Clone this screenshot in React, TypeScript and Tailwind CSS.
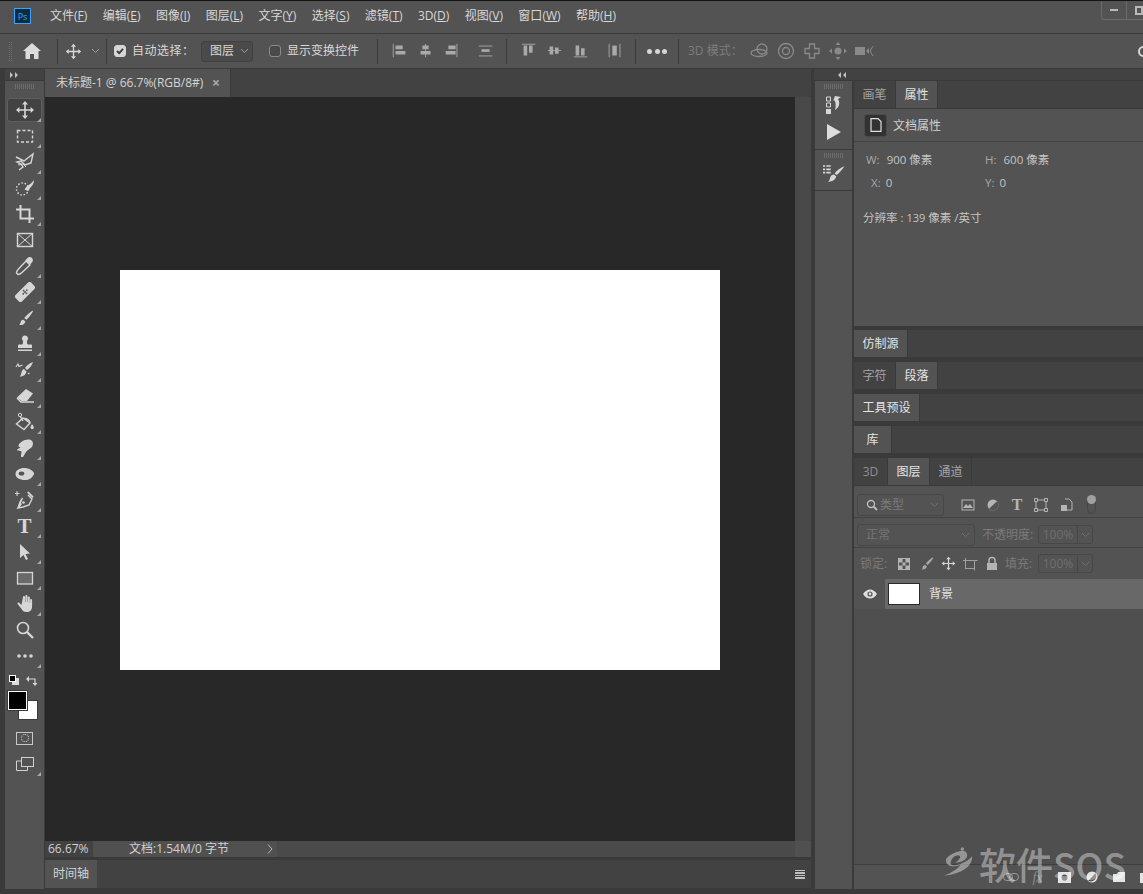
import type { ReactNode } from "react"

const menus = [
  ["文件", "F"],
  ["编辑", "E"],
  ["图像", "I"],
  ["图层", "L"],
  ["文字", "Y"],
  ["选择", "S"],
  ["滤镜", "T"],
  ["3D", "D"],
  ["视图", "V"],
  ["窗口", "W"],
  ["帮助", "H"],
]

function Svg({ size = 20, children, className = "" }: { size?: number; children: ReactNode; className?: string }) {
  return (
    <svg width={size} height={size} viewBox="0 0 20 20" className={className}>
      {children}
    </svg>
  )
}

const S = { fill: "none", stroke: "#d6d6d6", strokeWidth: 1.4 }
const F = { fill: "#d6d6d6" }

function MoveIcon({ size = 20 }: { size?: number }) {
  return (
    <Svg size={size}>
      <path d="M10 3v14M3 10h14" {...S} strokeWidth={1.6} />
      <path d="M10 1l3 3.4H7zM10 19l3-3.4H7zM1 10l3.4-3v6zM19 10l-3.4-3v6z" {...F} />
    </Svg>
  )
}

const BrushShape = "M17 3c.6-.5 1.2.1.8.8-1.500 2.600-4 6-6.400 8l-2.200-1.900C11 7.800 14.500 4.800 17 3zM8.400 11.700l2 1.700c-.5 2.400-2.800 3.900-6.400 3.600 1.500-.8 1.300-2 1.700-3.200.4-1.200 1.500-2.200 2.700-2.100z"

const tools: { icon: ReactNode; corner?: boolean }[] = [
  { icon: <MoveIcon />, corner: true },
  { icon: <Svg><rect x="2.500" y="4.500" width="15" height="11.500" {...S} strokeDasharray="3 2" /></Svg>, corner: true },
  { icon: <Svg><path d="M1 5l8 4 9-7-2 9-6 2-4-4-4 1 4 2 2 3-4 3" {...S} /><path d="M3 13l5-1 3 3" {...S} strokeWidth={1} /></Svg>, corner: true },
  { icon: <Svg><circle cx="7.500" cy="11" r="6" {...S} strokeDasharray="1.500 1.800" /><path d="M19 2c-2 3-5 5-7 6l-2.500 3.500 3.500 1.500 2.500-3.500C17.500 7.500 19 5 19 2z" {...F} /></Svg>, corner: true },
  { icon: <Svg><path d="M5.500 1v13.500H19M1 5.500h13.500V19" {...S} strokeWidth={2} /></Svg>, corner: true },
  { icon: <Svg><rect x="2.500" y="3.500" width="15" height="13" {...S} /><path d="M2.500 3.500l15 13M17.500 3.500l-15 13" {...S} strokeWidth={1} /></Svg> },
  { icon: <Svg><path d="M11 5l4 4-8 7.500c-1 1-3 2-4 2l-1.500-1.500c0-1 1-3 2-4z" {...S} /><path d="M12 2.500c1.500-1.500 3.500-2 5-.5s1 3.500-.5 5L15 8.500 10.500 4z" {...F} /></Svg>, corner: true },
  { icon: <Svg><g transform="rotate(-45 10 10)"><rect x="-1" y="5.500" width="22" height="9" rx="2.500" {...F} /><path d="M7.500 10h.100M10 8h.100M10 12h.100M12.500 10h.100M10 10h.100" stroke="#535353" strokeWidth="1.800" strokeLinecap="round" /></g></Svg>, corner: true },
  { icon: <Svg><path d={BrushShape} {...F} /></Svg>, corner: true },
  { icon: <Svg><path d="M10 1.500a3 3 0 012 5.300c-.2 1.500 0 2.700.8 3.700H16a1 1 0 011 1v2.500H3V11.500a1 1 0 011-1h3.200c.8-1 1-2.200.800-3.700A3 3 0 0110 1.500zM3 15.500h14V17H3z" {...F} /></Svg>, corner: true },
  { icon: <Svg><path d="M18 2c-1 3-3 6-6 8l-2-2c2-3 5-5 8-6zM9 9l2.500 2.500c-.5 3-3 5-7 5 1.500-1 1.500-2.500 2-4 .5-2 1.500-3.500 2.500-3.500z" {...F} /><path d="M1 7l2-3 1 2.500 3.500-1.500M13 14l1.500-1M16 9.500v.100" {...S} strokeWidth={1.100} /></Svg>, corner: true },
  { icon: <Svg><path d="M11 3l7 4.500L12 15H6.500L2 11.500z" {...F} /><path d="M2 12l4 4h13" {...S} /></Svg>, corner: true },
  { icon: <Svg><path d="M8 6l7 5-6 6.500-7.500-5.500z" {...S} /><path d="M5 4l3 5" {...S} /><circle cx="5" cy="3" r="1.700" {...S} strokeWidth={1} /><path d="M8 6c3-1 7 1 8 5M17 12c1 1.500 2.500 3 1.500 4.500s-3.500 0-3-1.500z" {...F} /></Svg>, corner: true },
  { icon: <Svg><path d="M6 19c-.3-2.500 1-5 .3-5.800-1-.800-3.300 0-4.300-1 0-1 2-2 3.500-2.500-1-.5-2-.7-2-1.700C3.500 5 8.500 1.500 13.500 1.500c3.500 0 5 2.500 4.300 5.500-.8 3.500-5 4-6.800 7-1 1.500-2 3.500-3 5z" {...F} /></Svg>, corner: true },
  { icon: <Svg><path d="M.5 10C.5 6.500 4.500 4 9 4c5 0 8.500 2.200 10 5 .5 1.500-.7 2.200-1.300 3.200C16.500 14 14.500 16 10 16c-5.500 0-9.500-2.200-9.500-6z" {...F} /><ellipse cx="6.500" cy="9.500" rx="2.800" ry="2" fill="#535353" /></Svg>, corner: true },
  { icon: <Svg><path d="M13 5l4 4-3 6-6 2-5 1 3.500-4.500M3 18l2-6 2.500-4z" {...S} /><path d="M12 2.500l5.500 5.500 1-1.500-5-5z" {...F} /><circle cx="8.500" cy="12.500" r="1.300" {...F} /><path d="M2 1v5M-.5 3.500H4.500" {...S} strokeWidth={1} /></Svg>, corner: true },
  { icon: <span className="font-['Liberation_Serif'] text-[21px] font-bold leading-none text-[#d6d6d6]">T</span>, corner: true },
  { icon: <Svg><path d="M5 2l10 9.500-4.500.5 2.500 5-2 1-2.500-5-3.500 3z" {...F} /></Svg>, corner: true },
  { icon: <Svg><rect x="2.500" y="4.500" width="15" height="11.500" fill="#6a6a6a" stroke="#d6d6d6" strokeWidth="1.300" /></Svg>, corner: true },
  { icon: <Svg><path d="M8 3a1 1 0 012 0v5h.400V2a1 1 0 012 0v6h.400V3.500a1 1 0 012 0V9h.300V6a1 1 0 012 0v6c0 4-2 6-5.500 6-3 0-4-1-5-3l-4-5c-.5-1 .8-2 1.800-1l2.100 2z" {...F} /></Svg>, corner: true },
  { icon: <Svg><circle cx="8" cy="8" r="5.500" {...S} strokeWidth={1.600} /><path d="M12 12l6 6" {...S} strokeWidth={2.400} /></Svg> },
  { icon: <Svg><circle cx="4" cy="10" r="1.800" {...F} /><circle cx="10" cy="10" r="1.800" {...F} /><circle cx="16" cy="10" r="1.800" {...F} /></Svg>, corner: true },
]

function Corner() {
  return <span className="absolute right-[3px] bottom-[1px] h-0 w-0 border-b-[4px] border-l-[4px] border-b-[#a8a8a8] border-l-transparent" />
}

function Sep() {
  return <span className="h-[25px] w-px bg-[#3a3a3a]" />
}

function Bars({ d, line }: { d: string; line: string }) {
  return (
    <Svg size={18}>
      <path d={d} fill="#a9a9a9" />
      <path d={line} stroke="#a9a9a9" strokeWidth="1" fill="none" />
    </Svg>
  )
}

function Checkbox({ checked }: { checked?: boolean }) {
  return (
    <span className={`flex h-[12px] w-[12px] items-center justify-center rounded-[3px] border ${checked ? "border-[#d6d6d6] bg-[#d6d6d6]" : "border-[#8a8a8a] bg-[#4a4a4a]"}`}>
      {checked && (
        <svg width="10" height="10" viewBox="0 0 10 10">
          <path d="M2 5l2.200 2.200L8 2.800" fill="none" stroke="#3a3a3a" strokeWidth="1.800" />
        </svg>
      )}
    </span>
  )
}

function Chevron({ color = "#a0a0a0" }: { color?: string }) {
  return (
    <svg width="9" height="6" viewBox="0 0 9 6">
      <path d="M1 1l3.500 3.500L8 1" fill="none" stroke={color} strokeWidth="1" />
    </svg>
  )
}

function OptionsBar() {
  return (
    <div className="flex h-[36px] shrink-0 items-center border-t border-b border-[#3a3a3a] bg-[#535353] text-[12px] text-[#d8d8d8]">
      <span className="ml-[9px] h-[19px] w-[3px] border-x border-dotted border-[#6e6e6e]" />
      <span className="flex w-[45px] justify-center pr-[5px]">
        <svg width="18" height="16" viewBox="0 0 18 16">
          <path d="M9 0l9 8h-2.500v8H11v-5H7v5H2.500V8H0z" fill="#dcdcdc" />
        </svg>
      </span>
      <Sep />
      <span className="flex w-[48px] items-center pl-[7px]">
        <MoveIcon size={17} />
        <span className="ml-[9px]">
          <Chevron />
        </span>
      </span>
      <Sep />
      <span className="ml-[7px]">
        <Checkbox checked />
      </span>
      <span className="ml-[6px] w-[69px] tracking-[0.5px]">自动选择：</span>
      <span className="flex h-[21px] w-[52px] items-center justify-between rounded-[3px] border border-[#414141] bg-[#4a4a4a] pr-[3px] pl-[8px]">
        图层
        <Chevron />
      </span>
      <span className="ml-[8px]">
        <Sep />
      </span>
      <span className="ml-[8px]">
        <Checkbox />
      </span>
      <span className="ml-[6px] w-[90px]">显示变换控件</span>
      <Sep />
      <span className="ml-[13px] flex w-[115px] items-center gap-[8px]">
        <Bars d="M5 4h8v4H5zM5 10h11v4H5z" line="M2.500 2v15" />
        <Bars d="M6 4h7v4H6zM4 10h11v4H4z" line="M9.500 2v15" />
        <Bars d="M6 4h8v4H6zM3 10h11v4H3z" line="M15.500 2v15" />
        <span className="ml-[8px]">
          <Bars d="M5 8h9v3H5z" line="M2 4.500h15M2 15.500h15" />
        </span>
      </span>
      <Sep />
      <span className="ml-[13px] flex w-[115px] items-center gap-[8px]">
        <Bars d="M4 4h4v11H4zM10 4h4v8h-4z" line="M2 2.500h15" />
        <Bars d="M4 5h4v9H4zM10 6h4v7h-4z" line="M2 9.500h15" />
        <Bars d="M4 4h4v11H4zM10 7h4v8h-4z" line="M2 16.500h15" />
        <span className="ml-[8px]">
          <Bars d="M7 4h5v11H7z" line="M3.500 2v15M15.500 2v15" />
        </span>
      </span>
      <Sep />
      <span className="flex w-[42px] justify-center gap-[2.500px]">
        <span className="h-[5px] w-[5px] rounded-full bg-[#d6d6d6]" />
        <span className="h-[5px] w-[5px] rounded-full bg-[#d6d6d6]" />
        <span className="h-[5px] w-[5px] rounded-full bg-[#d6d6d6]" />
      </span>
      <Sep />
      <span className="ml-[9px] w-[62px] text-[#7c7c7c]">3D 模式：</span>
      <span className="flex items-center gap-[6px]">
        <Svg>
          <circle cx="12" cy="8" r="5" fill="none" stroke="#8a8a8a" strokeWidth="1.300" />
          <ellipse cx="9" cy="12" rx="8" ry="3.500" fill="none" stroke="#8a8a8a" strokeWidth="1.300" />
        </Svg>
        <Svg>
          <circle cx="10" cy="10" r="7.500" fill="none" stroke="#8a8a8a" strokeWidth="1.300" />
          <circle cx="10" cy="10" r="3.500" fill="none" stroke="#8a8a8a" strokeWidth="1.300" />
        </Svg>
        <Svg>
          <path d="M7.500 3h5v4.500H17v5h-4.500V17h-5v-4.500H3v-5h4.500z" fill="none" stroke="#8a8a8a" strokeWidth="1.300" />
        </Svg>
        <Svg>
          <circle cx="10" cy="10" r="3.500" fill="#8a8a8a" />
          <path d="M10 1l2.500 3h-5zM10 19l2.500-3h-5zM1 10l3-2.500v5zM19 10l-3-2.500v5z" fill="#8a8a8a" />
        </Svg>
        <Svg>
          <path d="M1 6h10v8H1zM12 10l3-3v6z" fill="#8a8a8a" />
          <path d="M19 5l-3 5 3 5" fill="none" stroke="#8a8a8a" />
        </Svg>
      </span>
      <span className="ml-auto mr-[-6px] h-[11px] w-[11px] rounded-full border-2 border-[#d6d6d6]" />
    </div>
  )
}

function ToolBar() {
  return (
    <div className="ml-[4px] flex w-[41px] shrink-0 flex-col border-x border-[#3a3a3a] bg-[#535353]">
      <div className="flex h-[12px] shrink-0 items-center border-b border-[#3a3a3a] bg-[#424242] pl-[5px] text-[#c8c8c8]">
        <svg width="9" height="6" viewBox="0 0 9 6">
          <path d="M0 0l3 3-3 3zM5 0l3 3-3 3z" fill="#c4c4c4" />
        </svg>
      </div>
      <div className="mx-auto mt-[3px] mb-[8px] h-[5px] w-[20px] bg-[repeating-linear-gradient(90deg,#6c6c6c_0_1px,transparent_1px_2px)]" />
      <div className="flex flex-col items-center">
        {tools.map((t, i) => (
          <div key={i} className="relative flex h-[26px] w-full items-center justify-center">
            {i === 0 && <span className="absolute inset-x-[2px] inset-y-[1px] rounded-[3px] border border-[#5e5e5e] bg-[#424242]" />}
            <span className="relative flex items-center justify-center">{t.icon}</span>
            {t.corner && <Corner />}
          </div>
        ))}
      </div>
      <div className="relative mt-[6px] h-[14px]">
        <span className="absolute top-[3px] left-[7px] h-[7px] w-[7px] bg-[#dcdcdc]" />
        <span className="absolute top-0 left-[4px] h-[7px] w-[7px] border border-white bg-black" />
        <svg width="12" height="12" viewBox="0 0 12 12" className="absolute top-0 left-[21px]">
          <path d="M2 4h7v6" fill="none" stroke="#d6d6d6" strokeWidth="1.200" />
          <path d="M3 1v6L0 4zM6.500 8h5L9 11z" fill="#d6d6d6" />
        </svg>
      </div>
      <div className="relative h-[36px]">
        <span className="absolute top-[11px] left-[13px] h-[20px] w-[20px] border border-[#3a3a3a] bg-white" />
        <span className="absolute top-[2px] left-[3px] h-[19px] w-[19px] border border-white bg-black outline outline-[#3a3a3a]" />
      </div>
      <div className="flex h-[26px] items-center justify-center">
        <span className="flex h-[13px] w-[17px] items-center justify-center border border-[#c8c8c8]">
          <span className="h-[8px] w-[8px] rounded-full border border-dotted border-[#d6d6d6]" />
        </span>
      </div>
      <div className="relative flex h-[26px] items-center justify-center">
        <svg width="18" height="14" viewBox="0 0 18 14">
          <path d="M5.500 4H.5v9.500h11V9.500" fill="none" stroke="#d0d0d0" />
          <rect x="5.500" y=".5" width="12" height="9" fill="none" stroke="#d0d0d0" />
        </svg>
        <Corner />
      </div>
    </div>
  )
}

function CenterColumn() {
  return (
    <div className="flex min-w-0 flex-1 flex-col bg-[#3a3a3a]">
      <div className="flex h-[28px] shrink-0 bg-[#424242]">
        <div className="flex w-[186px] items-center justify-between border-r border-[#3a3a3a] bg-[#535353] pr-[10px] pl-[11px] text-[12px] text-[#d4d4d4]">
          <span className="whitespace-nowrap">未标题-1 @ 66.7%(RGB/8#)</span>
          <span className="text-[14px] font-bold leading-none text-[#a8a8a8]">×</span>
        </div>
      </div>
      <div className="flex min-h-0 flex-1">
        <div className="flex flex-1 items-center justify-center bg-[#282828] pt-[2px]">
          <div className="h-[400px] w-[600px] bg-white" />
        </div>
        <div className="w-[16px] bg-[#494949]" />
      </div>
      <div className="flex h-[16px] shrink-0 bg-[#424242] text-[12px] text-[#d0d0d0]">
        <span className="w-[48px] pl-[3px] leading-[16px]">66.67%</span>
        <span className="flex w-[184px] items-center justify-between bg-[#505050] pr-[4px] pl-[36px]">
          文档:1.54M/0 字节
          <svg width="6" height="10" viewBox="0 0 6 10">
            <path d="M1 .5L5 5 1 9.500" fill="none" stroke="#b8b8b8" />
          </svg>
        </span>
        <span className="flex-1 bg-[#4a4a4a]" />
        <span className="w-[16px] bg-[#505050]" />
      </div>
      <div className="mt-[3px] flex h-[29px] shrink-0 border-b border-[#3a3a3a] bg-[#424242] text-[12px]">
        <span className="flex w-[52px] items-center justify-center bg-[#535353] text-[#d4d4d4]">时间轴</span>
        <span className="ml-auto mr-[6px] flex flex-col justify-center gap-[1px]">
          <span className="h-[1.500px] w-[10px] bg-[#c0c0c0]" />
          <span className="h-[1.500px] w-[10px] bg-[#c0c0c0]" />
          <span className="h-[1.500px] w-[10px] bg-[#c0c0c0]" />
          <span className="h-[1.500px] w-[10px] bg-[#c0c0c0]" />
        </span>
      </div>
    </div>
  )
}

function Grip() {
  return <div className="mx-auto mt-[3px] h-[5px] w-[20px] bg-[repeating-linear-gradient(90deg,#6c6c6c_0_1px,transparent_1px_2px)]" />
}

function DockColumn() {
  return (
    <div className="flex w-[39px] shrink-0 flex-col border-x border-[#3a3a3a] bg-[#535353]">
      <div className="flex h-[69px] flex-col border-b border-[#3a3a3a]">
        <Grip />
        <div className="mt-[7px] flex justify-center">
          <svg width="16" height="18" viewBox="0 0 16 18">
            <path d="M.5 1h4v4h-4zM.5 7h4v4h-4z" fill="none" stroke="#d6d6d6" />
            <path d="M0 13h5v5H0zM9 0l6 1-3 2c2 3 2 8-3 11 1-4 1-8-1-10L7 5z" fill="#d6d6d6" />
          </svg>
        </div>
        <div className="mt-[10px] flex justify-center">
          <svg width="14" height="16" viewBox="0 0 14 16">
            <path d="M0 0l14 8-14 8z" fill="#dcdcdc" />
          </svg>
        </div>
      </div>
      <div className="flex h-[41px] flex-col border-b border-[#3a3a3a]">
        <Grip />
        <div className="mt-[6px] flex justify-center">
          <svg width="22" height="20" viewBox="0 0 20 18">
            <path d="M0 1h2v1.500H0zM3 1h4v1.500H3zM0 4h2v1.500H0zM3 4h4v1.500H3zM0 7h2v1.500H0zM3 7h4v1.500H3z" fill="#d6d6d6" />
            <path d="M19.500 2c-2 3-4.500 6-7 8l-2-1.500c2-2.500 5.500-5.500 9-6.500zM10 9.500l2 1.500c-.5 3-3.500 5-7.500 5 1.500-.7 1.500-2 2-3.500.5-2 2-3 3.500-3z" fill="#d6d6d6" />
          </svg>
        </div>
      </div>
    </div>
  )
}

function Tab({ label, active, className = "" }: { label: string; active?: boolean; className?: string }) {
  return (
    <span className={`flex h-full items-center justify-center border-r border-[#3a3a3a] px-[8.500px] ${active ? "bg-[#535353] text-[#e4e4e4]" : "text-[#a4a4a4]"} ${className}`}>
      {label}
    </span>
  )
}

function TabStrip({ children }: { children: ReactNode }) {
  return <div className="flex h-[28px] shrink-0 border-b border-[#3a3a3a] bg-[#424242] text-[12px]">{children}</div>
}

function Percent() {
  return (
    <span className="flex h-[19px] w-[55px] rounded-[3px] border border-[#474747] text-[#6f6f6f]">
      <span className="flex w-[39px] items-center justify-center border-r border-[#474747]">100%</span>
      <span className="flex flex-1 items-center justify-center">
        <Chevron color="#6e6e6e" />
      </span>
    </span>
  )
}

function LayersFilterIcons() {
  return (
    <span className="ml-[11px] flex items-center">
      <span className="flex w-[25px] justify-center">
        <Svg>
          <rect x="4" y="5" width="12" height="10" fill="none" stroke="#b4b4b4" />
          <path d="M5 13l3-4 2 2 2-2 3 4z" fill="#b4b4b4" />
        </Svg>
      </span>
      <span className="flex w-[25px] justify-center">
        <Svg>
          <circle cx="10" cy="10" r="5.500" fill="#b4b4b4" />
          <path d="M14 6.200A5.500 5.500 0 016 13.800z" fill="#535353" />
        </Svg>
      </span>
      <span className="flex w-[24px] justify-center font-['Liberation_Serif'] text-[16px] font-bold leading-none text-[#b4b4b4]">T</span>
      <span className="flex w-[24px] justify-center">
        <Svg>
          <rect x="5" y="5" width="10" height="10" fill="none" stroke="#b4b4b4" />
          <path d="M3.500 3.500h3v3h-3zM13.500 3.500h3v3h-3zM3.500 13.500h3v3h-3zM13.500 13.500h3v3h-3z" fill="#535353" stroke="#b4b4b4" />
        </Svg>
      </span>
      <span className="flex w-[25px] justify-center">
        <Svg>
          <path d="M9 4h4l3 3v8h-7" fill="none" stroke="#b4b4b4" />
          <path d="M5 10h6v6H5z" fill="#b4b4b4" />
        </Svg>
      </span>
      <span className="relative ml-[9px] h-[17px] w-[9px] rounded-full border border-[#464646]">
        <span className="absolute -top-[3px] -left-[1px] h-[9px] w-[9px] rounded-full bg-[#a0a0a0]" />
      </span>
    </span>
  )
}

function LockCell({ children }: { children: ReactNode }) {
  return <span className="flex w-[22px] justify-center">{children}</span>
}

function FootCell({ children }: { children: ReactNode }) {
  return <span className="flex w-[27px] shrink-0 justify-center">{children}</span>
}

function RightPanels() {
  return (
    <div className="flex min-w-0 flex-1 flex-col bg-[#3a3a3a] text-[12px]">
      <div className="flex h-[245px] shrink-0 flex-col bg-[#535353]">
        <TabStrip>
          <Tab label="画笔" />
          <Tab label="属性" active />
        </TabStrip>
        <div className="flex h-[33px] shrink-0 items-center border-b border-[#444444] pl-[10px] text-[#d0d0d0]">
          <span className="flex h-[23px] w-[23px] items-center justify-center rounded-[3px] border border-[#4a4a4a] bg-[#323232]">
            <svg width="12" height="14" viewBox="0 0 12 14">
              <path d="M1 .6h7l3 3v9.800H1z" fill="none" stroke="#e0e0e0" strokeWidth="1.200" />
            </svg>
          </span>
          <span className="mt-[2px] ml-[6px]">文档属性</span>
        </div>
        <div className="grid grid-cols-[119px_1fr] gap-y-[7px] pt-[10px] pl-[12px] text-[11.500px] leading-[16px] text-[#c4c4c4]">
          <span><span className="text-[#a8a8a8]">W:</span>  <span className="ml-[4px]">900 像素</span></span>
          <span><span className="text-[#a8a8a8]">H:</span>  <span className="ml-[4px]">600 像素</span></span>
          <span className="pl-[5px]"><span className="text-[#a8a8a8]">X:</span> <span className="ml-[2px]">0</span></span>
          <span><span className="text-[#a8a8a8]">Y:</span> <span className="ml-[2px]">0</span></span>
        </div>
        <div className="mt-[19px] pl-[9px] text-[11.500px] leading-[16px] text-[#c4c4c4]">分辨率 : <span className="text-[11px]">139</span> 像素 /英寸</div>
      </div>
      <div className="mt-[4px] shrink-0">
        <TabStrip>
          <Tab label="仿制源" active />
        </TabStrip>
      </div>
      <div className="mt-[4px] shrink-0">
        <TabStrip>
          <Tab label="字符" />
          <Tab label="段落" active />
        </TabStrip>
      </div>
      <div className="mt-[4px] shrink-0">
        <TabStrip>
          <Tab label="工具预设" active />
        </TabStrip>
      </div>
      <div className="mt-[4px] shrink-0">
        <TabStrip>
          <Tab label="库" active className="w-[38px]" />
        </TabStrip>
      </div>
      <div className="relative mt-[4px] flex min-h-0 flex-1 flex-col bg-[#4f4f4f]">
        <TabStrip>
          <span className="flex h-full w-[34px] items-center justify-center border-r border-[#3a3a3a] text-[#8e8e8e]">3D</span>
          <Tab label="图层" active />
          <Tab label="通道" />
        </TabStrip>
        <div className="flex h-[32px] shrink-0 items-center border-b border-[#444444] bg-[#535353] pt-[7px] pl-[3px]">
          <span className="flex h-[22px] w-[87px] items-center justify-between rounded-[3px] border border-[#474747] pr-[4px] pl-[8px] text-[#7a7a7a]">
            <span className="flex items-center gap-[2px]">
              <svg width="12" height="12" viewBox="0 0 12 12">
                <circle cx="5" cy="5" r="3.500" fill="none" stroke="#bcbcbc" strokeWidth="1.400" />
                <path d="M7.500 7.500L11 11" stroke="#bcbcbc" strokeWidth="2" />
              </svg>
              类型
            </span>
            <Chevron color="#6e6e6e" />
          </span>
          <LayersFilterIcons />
        </div>
        <div className="flex h-[30px] shrink-0 items-center border-b border-[#444444] bg-[#535353] pt-[4px] pl-[3px] text-[#7a7a7a]">
          <span className="flex h-[22px] w-[118px] items-center justify-between rounded-[3px] border border-[#474747] pr-[4px] pl-[8px] text-[#747474]">
            正常
            <Chevron color="#6e6e6e" />
          </span>
          <span className="ml-[7px] w-[56px] whitespace-nowrap">不透明度:</span>
          <Percent />
        </div>
        <div className="flex h-[31px] shrink-0 items-center bg-[#535353] pl-[6px] text-[#7a7a7a]">
          <span className="w-[33px]">锁定:</span>
          <LockCell>
            <svg width="17" height="16" viewBox="0 0 17 16">
              <rect x="2.500" y="2.500" width="11" height="11" fill="#535353" stroke="#b4b4b4" />
              <path d="M3 3h3.500v3.500H3zM9.500 3H13v3.500H9.500zM6.500 6.500H9.500v3H6.500zM3 9.500h3.500V13H3zM9.500 9.500H13V13H9.500z" fill="#b4b4b4" />
            </svg>
          </LockCell>
          <LockCell>
            <svg width="17" height="17" viewBox="0 0 20 20">
              <path d={BrushShape} fill="#a8a8a8" />
            </svg>
          </LockCell>
          <LockCell>
            <MoveIcon size={15} />
          </LockCell>
          <LockCell>
            <svg width="16" height="16" viewBox="0 0 16 16">
              <rect x="3.500" y="4.500" width="9" height="8" fill="none" stroke="#a0a0a0" />
              <path d="M1 4.500h2M3.500 2v2M12.500 12.500v2M12.500 4.500h3" stroke="#a0a0a0" />
            </svg>
          </LockCell>
          <LockCell>
            <svg width="14" height="15" viewBox="0 0 14 15">
              <path d="M4 7V4.500a3 3 0 016 0V7" fill="none" stroke="#b4b4b4" strokeWidth="1.500" />
              <path d="M2 7h10v7H2z" fill="#b4b4b4" />
            </svg>
          </LockCell>
          <span className="ml-[2px] w-[33px]">填充:</span>
          <Percent />
        </div>
        <div className="flex h-[30px] shrink-0 items-center bg-[#535353]">
          <span className="flex w-[31px] justify-center">
            <svg width="14" height="10" viewBox="0 0 14 10">
              <path d="M0 5c2-3 4.500-4.500 7-4.500S12 2 14 5c-2 3-4.500 4.500-7 4.500S2 8 0 5z" fill="#e0e0e0" />
              <circle cx="7" cy="5" r="2.600" fill="#535353" />
              <circle cx="7" cy="5" r="1.400" fill="#e0e0e0" />
            </svg>
          </span>
          <span className="flex h-full flex-1 items-center bg-[#686868] pl-[3px] text-[#e4e4e4]">
            <span className="h-[22px] w-[32px] border border-[#2a2a2a] bg-white" />
            <span className="ml-[9px]">背景</span>
          </span>
        </div>
        <div className="mt-auto flex h-[25px] shrink-0 items-center border-t border-[#3e3e3e] bg-[#535353] pl-[143px]">
          <FootCell>
            <svg width="16" height="10" viewBox="0 0 16 10">
              <rect x=".5" y="1.500" width="9" height="7" rx="3.500" fill="none" stroke="#9a9a9a" />
              <rect x="6.500" y="1.500" width="9" height="7" rx="3.500" fill="none" stroke="#9a9a9a" />
            </svg>
          </FootCell>
          <FootCell>
            <span className="font-['Liberation_Serif'] text-[14px] italic text-[#8a8a8a]">fx</span>
          </FootCell>
          <FootCell>
            <svg width="13" height="11" viewBox="0 0 13 11">
              <path fillRule="evenodd" d="M0 0h13v11H0zM6.500 2.500a3 3 0 100 6 3 3 0 000-6z" fill="#e4e4e4" />
            </svg>
          </FootCell>
          <FootCell>
            <svg width="12" height="12" viewBox="0 0 12 12">
              <circle cx="6" cy="6" r="5.500" fill="#e4e4e4" />
              <path d="M9.500 2.200A5.500 5.500 0 012.200 9.800z" fill="#535353" />
            </svg>
          </FootCell>
          <FootCell>
            <svg width="12" height="10" viewBox="0 0 12 10">
              <path d="M0 2h4l1-2h7v10H0z" fill="#e4e4e4" />
            </svg>
          </FootCell>
          <FootCell>
            <svg width="11" height="11" viewBox="0 0 11 11">
              <path d="M0 1h10v10H0z" fill="#e4e4e4" />
            </svg>
          </FootCell>
        </div>
        <div className="pointer-events-none absolute right-[17px] bottom-[6px] flex items-center gap-[5px] text-white/40">
          <svg width="31" height="38" viewBox="0 0 32 36">
            <path d="M16 5c5-2 9 0 9 4 0 5-6 7-12 8 5-5 6-7 3-8-4 0-7 3-8 7-1 3 2 4 6 3 5-1 12-4 16-9 1 7-6 16-22 19-3 .5-5 .8-7 1 10-4 14-7 17-11-8 3-15 1-15-5C3 11 9 7 16 5z" fill="currentColor" />
            <circle cx="20" cy="2.500" r="1.800" fill="currentColor" />
          </svg>
          <span className="font-['Noto_Sans_CJK_SC'] text-[37px] font-medium leading-none">软件SOS</span>
        </div>
      </div>
    </div>
  )
}

export default function App() {
  return (
    <div className="relative flex h-[894px] w-[1143px] flex-col overflow-hidden bg-[#535353] font-['Open_Sans','Noto_Sans_CJK_SC',sans-serif]">
      {/* Menu bar */}
      <div className="flex h-[33px] shrink-0 items-center border-t border-[#141414] pb-[2px] text-[12px] text-[#d8d8d8]">
        <span className="ml-[14px] flex h-[16px] w-[17px] items-center justify-center border border-[#31a8ff] bg-[#0f2a40] text-[9px] leading-none text-[#31a8ff]">Ps</span>
        <span className="ml-[19px] flex items-center gap-[15.400px] whitespace-nowrap">
          {menus.map(([name, key]) => (
            <span key={key}>
              {name}(<u>{key}</u>)
            </span>
          ))}
        </span>
        <span className="ml-auto flex h-[19px] w-[42px] items-center self-start rounded-bl-[3px] border-b border-l border-[#6a6a6a] pl-[8px]">
          <span className="h-[2px] w-[10px] bg-[#b8b8b8]" />
          <span className="ml-[8px] h-[19px] w-px bg-[#6a6a6a]" />
          <span className="ml-[8px] h-[9px] w-[9px] border-2 border-[#b8b8b8]" />
        </span>
      </div>
      <OptionsBar />
      <div className="flex min-h-0 flex-1 bg-[#3a3a3a]">
        <ToolBar />
        <CenterColumn />
        <div className="ml-[3px] flex w-[329px] shrink-0 flex-col">
          <div className="flex h-[12px] shrink-0 items-center justify-start border-b border-[#3a3a3a] bg-[#424242] pl-[24px]">
            <svg width="9" height="6" viewBox="0 0 9 6">
              <path d="M3 0L0 3l3 3zM8 0L5 3l3 3z" fill="#c4c4c4" />
            </svg>
          </div>
          <div className="flex min-h-0 flex-1 gap-px">
            <DockColumn />
            <RightPanels />
          </div>
        </div>
      </div>
      <div className="h-[5px] shrink-0 bg-[#3a3a3a]" />
    </div>
  )
}
